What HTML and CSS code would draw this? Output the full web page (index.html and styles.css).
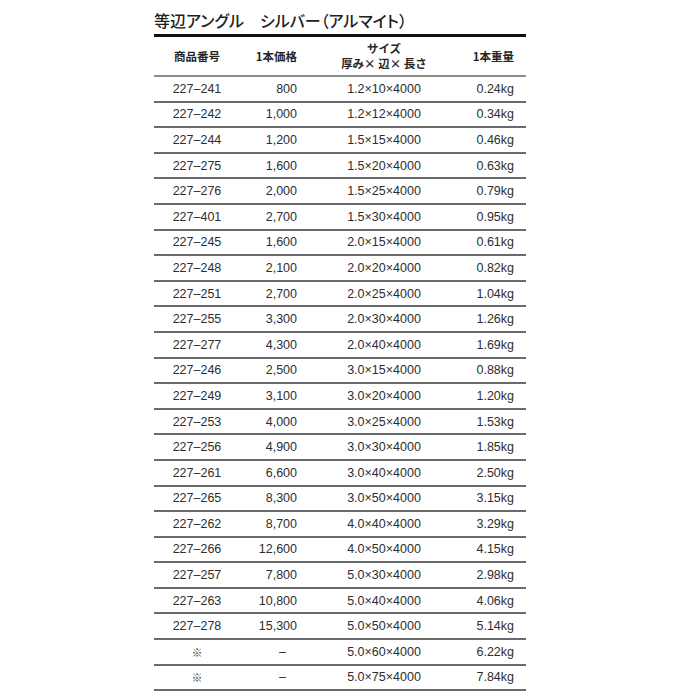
FILE: index.html
```html
<!DOCTYPE html>
<html lang="ja">
<head>
<meta charset="utf-8">
<link rel="stylesheet" href="styles.css">
</head>
<body>
<div class="sheet">
  <h1 class="title">等辺アングル　シルバー（アルマイト）</h1>
  <div class="row head">
    <div class="c1">商品番号</div>
    <div class="c2">1本価格</div>
    <div class="c3"><span>サイズ</span><span>厚み× 辺× 長さ</span></div>
    <div class="c4">1本重量</div>
  </div>
  <div class="row"><div class="c1">227–241</div><div class="c2">800</div><div class="c3">1.2×10×4000</div><div class="c4">0.24kg</div></div>
  <div class="row"><div class="c1">227–242</div><div class="c2">1,000</div><div class="c3">1.2×12×4000</div><div class="c4">0.34kg</div></div>
  <div class="row"><div class="c1">227–244</div><div class="c2">1,200</div><div class="c3">1.5×15×4000</div><div class="c4">0.46kg</div></div>
  <div class="row"><div class="c1">227–275</div><div class="c2">1,600</div><div class="c3">1.5×20×4000</div><div class="c4">0.63kg</div></div>
  <div class="row"><div class="c1">227–276</div><div class="c2">2,000</div><div class="c3">1.5×25×4000</div><div class="c4">0.79kg</div></div>
  <div class="row"><div class="c1">227–401</div><div class="c2">2,700</div><div class="c3">1.5×30×4000</div><div class="c4">0.95kg</div></div>
  <div class="row"><div class="c1">227–245</div><div class="c2">1,600</div><div class="c3">2.0×15×4000</div><div class="c4">0.61kg</div></div>
  <div class="row"><div class="c1">227–248</div><div class="c2">2,100</div><div class="c3">2.0×20×4000</div><div class="c4">0.82kg</div></div>
  <div class="row"><div class="c1">227–251</div><div class="c2">2,700</div><div class="c3">2.0×25×4000</div><div class="c4">1.04kg</div></div>
  <div class="row"><div class="c1">227–255</div><div class="c2">3,300</div><div class="c3">2.0×30×4000</div><div class="c4">1.26kg</div></div>
  <div class="row"><div class="c1">227–277</div><div class="c2">4,300</div><div class="c3">2.0×40×4000</div><div class="c4">1.69kg</div></div>
  <div class="row"><div class="c1">227–246</div><div class="c2">2,500</div><div class="c3">3.0×15×4000</div><div class="c4">0.88kg</div></div>
  <div class="row"><div class="c1">227–249</div><div class="c2">3,100</div><div class="c3">3.0×20×4000</div><div class="c4">1.20kg</div></div>
  <div class="row"><div class="c1">227–253</div><div class="c2">4,000</div><div class="c3">3.0×25×4000</div><div class="c4">1.53kg</div></div>
  <div class="row"><div class="c1">227–256</div><div class="c2">4,900</div><div class="c3">3.0×30×4000</div><div class="c4">1.85kg</div></div>
  <div class="row"><div class="c1">227–261</div><div class="c2">6,600</div><div class="c3">3.0×40×4000</div><div class="c4">2.50kg</div></div>
  <div class="row"><div class="c1">227–265</div><div class="c2">8,300</div><div class="c3">3.0×50×4000</div><div class="c4">3.15kg</div></div>
  <div class="row"><div class="c1">227–262</div><div class="c2">8,700</div><div class="c3">4.0×40×4000</div><div class="c4">3.29kg</div></div>
  <div class="row"><div class="c1">227–266</div><div class="c2">12,600</div><div class="c3">4.0×50×4000</div><div class="c4">4.15kg</div></div>
  <div class="row"><div class="c1">227–257</div><div class="c2">7,800</div><div class="c3">5.0×30×4000</div><div class="c4">2.98kg</div></div>
  <div class="row"><div class="c1">227–263</div><div class="c2">10,800</div><div class="c3">5.0×40×4000</div><div class="c4">4.06kg</div></div>
  <div class="row"><div class="c1">227–278</div><div class="c2">15,300</div><div class="c3">5.0×50×4000</div><div class="c4">5.14kg</div></div>
  <div class="row"><div class="c1 mark">※</div><div class="c2 dash">–</div><div class="c3">5.0×60×4000</div><div class="c4">6.22kg</div></div>
  <div class="row"><div class="c1 mark">※</div><div class="c2 dash">–</div><div class="c3">5.0×75×4000</div><div class="c4">7.84kg</div></div>
</div>
</body>
</html>
```
FILE: styles.css
```css
html, body {
  margin: 0;
  padding: 0;
  background: #fff;
}
.sheet {
  width: 372px;
  margin-left: 154px;
  font-family: "Liberation Sans", Arial, sans-serif;
  color: #2e2e2e;
}
.title {
  margin: 10px 0 0 0;
  padding: 0 0 4px 0;
  font-family: "Noto Sans CJK JP", sans-serif;
  font-feature-settings: "palt";
  font-size: 16px;
  font-weight: 500;
  line-height: 20px;
  color: #1e1e1e;
  border-bottom: 3px solid #111;
}
.row {
  display: grid;
  grid-template-columns: 86px 57px 174px 55px;
  align-items: center;
  height: 23.6px;
  border-bottom: 2px solid #6a6a6a;
  font-size: 12.5px;
  line-height: 14px;
}
.row.head {
  height: 38px;
  border-bottom-color: #8e8e8e;
  font-family: "Noto Sans CJK JP", sans-serif;
  font-weight: 700;
  font-size: 11.5px;
  color: #262626;
}
.c1 { text-align: center; }
.c2 { text-align: right; }
.c3 { text-align: center; }
.c4 { text-align: right; padding-right: 12px; }
.head .c3 {
  display: flex;
  flex-direction: column;
  align-items: center;
  line-height: 15.5px;
}
.mark {
  font-family: "Noto Sans CJK JP", sans-serif;
  font-size: 11px;
  font-weight: 700;
  color: #444;
}
.dash { padding-right: 11px; }
```
